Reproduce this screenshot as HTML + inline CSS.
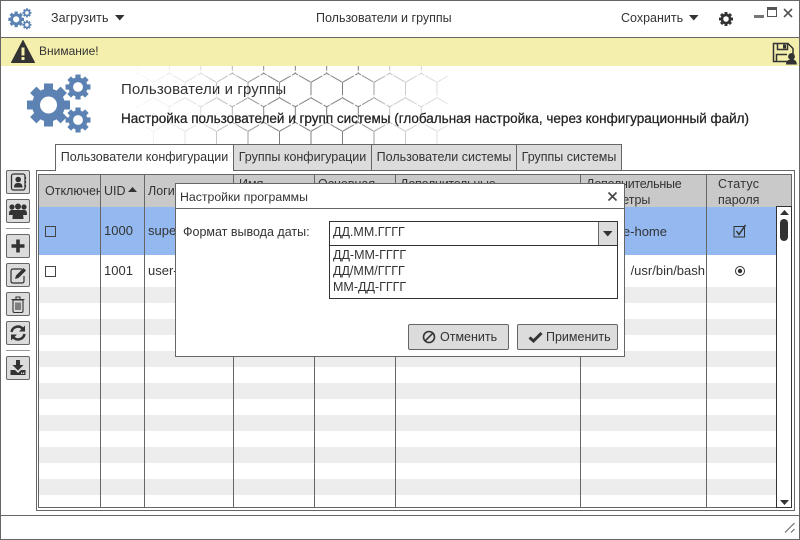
<!DOCTYPE html>
<html><head><meta charset="utf-8">
<style>
*{box-sizing:border-box}
html,body{margin:0;padding:0;width:800px;height:540px;overflow:hidden;background:#fff}
body{font-family:"Liberation Sans","DejaVu Sans",sans-serif;color:#333;font-size:12px;position:relative}
.a{position:absolute;white-space:nowrap}
.l{position:absolute;background:#666}
.tab{position:absolute;top:144px;height:27px;background:#dcdcdc;border:1px solid #666;font-size:12.5px;line-height:24px;text-align:center;color:#333;white-space:nowrap}
.btn{position:absolute;left:6px;width:24px;height:24px;background:#dcdcdc;border:1px solid #666;border-radius:2px}
.btn svg{position:absolute;left:0;top:0}
.row{position:absolute;left:39px;width:737px;height:16px;background:#ededed}
.v{position:absolute;top:175px;height:332px;width:1px;background:#666}
.h{position:absolute;font-size:12.5px;line-height:16px;color:#333;white-space:nowrap}
.dbtn{position:absolute;top:324px;height:26px;width:101px;background:#dcdcdc;border:1px solid #666;border-radius:2px;font-size:12.5px;line-height:24px;color:#333}
</style></head>
<body>
<svg width="0" height="0" style="position:absolute">
<defs>
<g id="gear"><circle r="16.500" fill="currentColor"/><rect x="-4.500" y="-21.500" width="9" height="43" fill="currentColor"/><rect x="-4.500" y="-21.500" width="9" height="43" fill="currentColor" transform="rotate(45)"/><rect x="-4.500" y="-21.500" width="9" height="43" fill="currentColor" transform="rotate(90)"/><rect x="-4.500" y="-21.500" width="9" height="43" fill="currentColor" transform="rotate(135)"/><circle r="8.500" fill="#fff"/></g>
<g id="gears"><use href="#gear" transform="translate(22.500,31)"/><use href="#gear" transform="translate(52,13) scale(.58)"/><use href="#gear" transform="translate(52,46) scale(.58)"/></g>
</defs></svg>

<!-- window frame -->
<div class="a" style="left:0;top:0;width:800px;height:540px;border:1px solid #666"></div>
<div class="l" style="left:1px;top:37px;width:798px;height:1px"></div>
<div class="a" style="left:1px;top:38px;width:798px;height:28px;background:#f4efad"></div>
<div class="l" style="left:1px;top:515px;width:798px;height:1px"></div>

<!-- toolbar -->
<svg class="a" style="left:8px;top:8px;color:#5b82b2;overflow:visible" width="24" height="22" viewBox="0 0 66 60"><use href="#gears"/></svg>
<div class="a" style="left:51px;top:11px;font-size:12.500px;line-height:15px;letter-spacing:.05px">Загрузить</div>
<svg class="a" style="left:115px;top:15px" width="10" height="6"><path d="M0 0H9.500L4.750 5.500Z" fill="#333"/></svg>
<div class="a" style="left:316px;top:11px;font-size:12.500px;line-height:15px">Пользователи и группы</div>
<div class="a" style="left:621px;top:11px;font-size:12.500px;line-height:15px">Сохранить</div>
<svg class="a" style="left:689px;top:15px" width="10" height="6"><path d="M0 0H9.500L4.750 5.500Z" fill="#333"/></svg>
<svg class="a" style="left:719px;top:12px;color:#333" width="14" height="14" viewBox="-21.500 -21.500 43 43"><use href="#gear"/></svg>
<div class="a" style="left:754px;top:15px;width:10px;height:3px;background:#777"></div>
<div class="a" style="left:767px;top:7px;width:10px;height:10px;border:1px solid #555;border-top:3px solid #555"></div>
<svg class="a" style="left:783px;top:8px" width="10" height="10"><path d="M1 1L9 9M9 1L1 9" stroke="#555" stroke-width="1.600"/></svg>

<!-- warning -->
<svg class="a" style="left:11px;top:40px" width="24" height="23" viewBox="0 0 24 23"><path d="M12 0.500L23.500 22.500H0.500Z" fill="#333" stroke="#333" stroke-linejoin="round"/><rect x="10.500" y="7.500" width="3" height="8" fill="#f4efad"/><rect x="10.500" y="17" width="3" height="3" fill="#f4efad"/></svg>
<div class="a" style="left:39px;top:44px;font-size:12px;line-height:15px">Внимание!</div>
<svg class="a" style="left:772px;top:42px" width="25" height="23" viewBox="0 0 25 23"><path d="M1.500 1.500H16L21 6.500V19.500H1.500Z M5.500 1.500V7.500H15.500V1.500 M4.500 19.500V12.500H15" fill="none" stroke="#333" stroke-width="1.500"/><rect x="11" y="2.500" width="3" height="4" fill="#333"/><circle cx="19.500" cy="14.500" r="3.400" fill="#333"/><path d="M14 22.500C14 18.500 16.500 17.500 19.500 17.500S24.800 18.500 24.800 22.500Z" fill="#333"/></svg>

<!-- hexagon backdrop -->
<svg class="a" style="left:130px;top:66px" width="500" height="78" viewBox="130 66 500 78">
<defs>
<pattern id="hx" x="311" y="73.300" width="31.500" height="49" patternUnits="userSpaceOnUse">
<path d="M0 9L15.750 0L31.500 9M0 9V24.500M31.500 9V24.500M0 24.500L15.750 33.500L31.500 24.500M15.750 33.500V49" fill="none" stroke="#444" stroke-width=".8" stroke-dasharray="13 1.500 7 1"/>
</pattern>
<linearGradient id="fd" x1="0" x2="1" y1="0" y2="0">
<stop offset="0" stop-color="#fff" stop-opacity=".03"/><stop offset=".04" stop-color="#fff" stop-opacity=".08"/><stop offset=".14" stop-color="#fff" stop-opacity=".22"/><stop offset=".28" stop-color="#fff" stop-opacity=".85"/><stop offset=".46" stop-color="#fff" stop-opacity=".85"/><stop offset=".52" stop-color="#fff" stop-opacity=".4"/><stop offset=".634" stop-color="#fff" stop-opacity=".18"/><stop offset=".64" stop-color="#fff" stop-opacity="0"/><stop offset="1" stop-color="#fff" stop-opacity="0"/>
</linearGradient>
<mask id="mk"><rect x="130" y="66" width="500" height="78" fill="url(#fd)"/></mask>
</defs>
<rect x="130" y="66" width="500" height="78" fill="url(#hx)" mask="url(#mk)"/>
</svg>

<!-- header -->
<svg class="a" style="left:26px;top:74px;color:#5b82b2;overflow:visible" width="66" height="60" viewBox="0 0 66 60"><use href="#gears"/></svg>
<div class="a" style="left:121px;top:81px;font-size:15px;line-height:18px;color:#333;letter-spacing:.12px">Пользователи и группы</div>
<div class="a" style="left:121px;top:110px;font-size:13.500px;line-height:17px;color:#222;-webkit-text-stroke:.25px #222">Настройка пользователей и групп системы (глобальная настройка, через конфигурационный файл)</div>

<!-- panel -->
<div class="a" style="left:36px;top:170px;width:759px;height:341px;border:1px solid #666"></div>
<div class="tab" style="left:233px;width:139px">Группы конфигурации</div>
<div class="tab" style="left:371px;width:146px">Пользователи системы</div>
<div class="tab" style="left:516px;width:106px">Группы системы</div>
<div class="tab" style="left:55px;width:179px;background:#fff;border-bottom:none">Пользователи конфигурации</div>

<!-- table -->
<div class="a" style="left:38px;top:174px;width:754px;height:334px;border:1px solid #666;background:#fff"></div>
<div class="a" style="left:39px;top:175px;width:752px;height:32px;background:#c9c9c9"></div>
<div class="a" style="left:39px;top:207px;width:737px;height:48px;background:#93b9f0"></div>
<div class="row" style="top:287px"></div><div class="row" style="top:319px"></div><div class="row" style="top:351px"></div><div class="row" style="top:383px"></div><div class="row" style="top:415px"></div><div class="row" style="top:447px"></div><div class="row" style="top:479px"></div>
<div class="v" style="left:100px"></div><div class="v" style="left:144px"></div><div class="v" style="left:233px"></div><div class="v" style="left:314px"></div><div class="v" style="left:395px"></div><div class="v" style="left:580px"></div><div class="v" style="left:706px"></div>

<div class="a" style="left:45px;top:183px;width:55px;overflow:hidden;font-size:12.500px;line-height:16px">Отключен</div>
<div class="h" style="left:104px;top:183px">UID</div>
<svg class="a" style="left:128px;top:187px" width="9" height="5"><path d="M0 5L4.500 0L9 5Z" fill="#333"/></svg>
<div class="h" style="left:148px;top:183px">Логин</div>
<div class="h" style="left:239px;top:176px">Имя</div>
<div class="h" style="left:318px;top:176px">Основная</div>
<div class="h" style="left:400px;top:176px;letter-spacing:-.25px">Дополнительные</div>
<div class="h" style="left:586px;top:176px;letter-spacing:-.25px">Дополнительные</div>
<div class="h" style="left:586px;top:192px">параметры</div>
<div class="h" style="left:718px;top:176px;letter-spacing:.3px">Статус</div>
<div class="h" style="left:718px;top:192px">пароля</div>

<div class="a" style="left:45px;top:226px;width:11px;height:11px;border:1px solid #444"></div>
<div class="a" style="left:45px;top:266px;width:11px;height:11px;border:1px solid #444"></div>
<div class="a" style="left:104px;top:223px;font-size:13px;line-height:16px">1000</div>
<div class="a" style="left:104px;top:263px;font-size:13px;line-height:16px">1001</div>
<div class="a" style="left:148px;top:223px;font-size:13px;line-height:16px">super</div>
<div class="a" style="left:148px;top:263px;font-size:13px;line-height:16px">user-</div>
<div class="a" style="left:567px;top:224px;width:100px;text-align:right;font-size:13px;line-height:16px">home/e-home</div>
<div class="a" style="left:586px;top:263px;width:119px;text-align:right;overflow:hidden;font-size:13px;line-height:16px">/usr/bin/bash</div>
<svg class="a" style="left:733px;top:224px" width="14" height="14"><rect x="1" y="2.500" width="10.500" height="10.500" fill="none" stroke="#333"/><path d="M3.500 7L6 10.500L12.500 1" fill="none" stroke="#333" stroke-width="1.500"/></svg>
<svg class="a" style="left:734px;top:265px" width="12" height="12"><circle cx="6" cy="6" r="4.500" fill="none" stroke="#333"/><circle cx="6" cy="6" r="2.200" fill="#333"/></svg>

<!-- scrollbar -->
<div class="a" style="left:776px;top:206px;width:16px;height:302px;background:#fff;border:1px solid #333"></div>
<svg class="a" style="left:780px;top:210px" width="9" height="5"><path d="M0 5L4.500 0L9 5Z" fill="#333"/></svg>
<div class="a" style="left:780px;top:219px;width:8px;height:22px;background:#333;border-radius:4px"></div>
<svg class="a" style="left:780px;top:500px" width="9" height="5"><path d="M0 0H9L4.500 5Z" fill="#333"/></svg>

<!-- side toolbar -->
<div class="btn" style="top:170px"><svg width="22" height="22"><rect x="4.500" y="3" width="13.500" height="16" rx="2" fill="none" stroke="#333" stroke-width="1.300"/><circle cx="11.200" cy="8.500" r="2.800" fill="#333"/><path d="M7 16.500C7 12.500 9 12 11.200 12S15.500 12.500 15.500 16.500Z" fill="#333"/><path d="M18.500 6V8M18.500 10V12M18.500 14V16" stroke="#333" stroke-width="1.200"/></svg></div>
<div class="btn" style="top:199px"><svg width="22" height="22"><circle cx="5" cy="7" r="2.600" fill="#333"/><circle cx="17" cy="7" r="2.600" fill="#333"/><circle cx="11" cy="6.500" r="3" fill="#333"/><path d="M2 14C2 10.500 3.500 10 5 10H17C18.500 10 20 10.500 20 14V15H2ZM5.500 19C5.500 12 8 11 11 11S16.500 12 16.500 19Z" fill="#333"/></svg></div>
<div class="a" style="left:6px;top:228px;width:24px;height:1px;background:#999"></div>
<div class="btn" style="top:234px"><svg width="22" height="22"><path d="M11 4.500V17.500M4.500 11H17.500" stroke="#333" stroke-width="3.600" fill="none"/></svg></div>
<div class="btn" style="top:263px"><svg width="22" height="22"><path d="M15 5H6Q4 5 4 7V17Q4 19 6 19H15Q17 19 17 17V12" fill="none" stroke="#333" stroke-width="1.200"/><path d="M8 15L9 11.500L16.500 4L19 6.500L11.500 14Z" fill="#333"/></svg></div>
<div class="btn" style="top:292px"><svg width="22" height="22"><path d="M6 7H16V18Q16 19.500 14.500 19.500H7.500Q6 19.500 6 18Z M4.500 6.500H17.500 M9 6V4H13V6 M9 9.500V17 M11 9.500V17 M13 9.500V17" fill="none" stroke="#333" stroke-width="1.100"/></svg></div>
<div class="btn" style="top:321px"><svg width="22" height="22"><path d="M4.500 10A6.500 6.500 0 0 1 15.500 6.500M17.500 12A6.500 6.500 0 0 1 6.500 15.500" fill="none" stroke="#333" stroke-width="2.500"/><path d="M18 3.500V9.500H12ZM4 18.500V12.500H10Z" fill="#333"/></svg></div>
<div class="a" style="left:6px;top:350px;width:24px;height:1px;background:#999"></div>
<div class="btn" style="top:356px"><svg width="22" height="22"><path d="M9 3H13V8H16.500L11 13.500L5.500 8H9Z" fill="#333"/><path d="M3.500 13H8L11 16L14 13H18.500V18H3.500Z" fill="#333"/><rect x="14" y="15.500" width="1.200" height="1.500" fill="#dcdcdc"/><rect x="16" y="15.500" width="1.200" height="1.500" fill="#dcdcdc"/></svg></div>

<!-- dialog -->
<div class="a" style="left:175px;top:183px;width:450px;height:174px;background:#fff;border:1px solid #666"></div>
<div class="l" style="left:176px;top:208px;width:448px;height:1px"></div>
<div class="a" style="left:180px;top:190px;font-size:12.300px;line-height:15px">Настройки программы</div>
<svg class="a" style="left:607px;top:191px" width="11" height="11"><path d="M1.500 1.500L9.500 9.500M9.500 1.500L1.500 9.500" stroke="#444" stroke-width="1.600"/></svg>
<div class="a" style="left:183px;top:225px;font-size:12.500px;line-height:15px">Формат вывода даты:</div>
<div class="a" style="left:329px;top:221px;width:289px;height:25px;border:1px solid #333;background:#fff"></div>
<div class="a" style="left:333px;top:225px;font-size:12.500px;line-height:15px">ДД.ММ.ГГГГ</div>
<div class="a" style="left:598px;top:222px;width:19px;height:23px;background:#dcdcdc;border-left:1px solid #666"></div>
<svg class="a" style="left:603px;top:231px" width="10" height="6"><path d="M0 0H9.500L4.750 5.500Z" fill="#333"/></svg>
<div class="a" style="left:329px;top:245px;width:289px;height:54px;border:1px solid #333;background:#fff"></div>
<div class="a" style="left:333px;top:247px;font-size:12.500px;line-height:16px">ДД-ММ-ГГГГ<br>ДД/ММ/ГГГГ<br>ММ-ДД-ГГГГ</div>
<div class="dbtn" style="left:408px"><svg class="a" style="left:13px;top:5px" width="14" height="14"><circle cx="7" cy="7" r="5.500" fill="none" stroke="#333" stroke-width="1.600"/><path d="M3.200 10.800L10.800 3.200" stroke="#333" stroke-width="1.600"/></svg><span class="a" style="left:31px;top:0">Отменить</span></div>
<div class="dbtn" style="left:517px"><svg class="a" style="left:10px;top:5px" width="15" height="14"><path d="M1.500 7.500L5.500 11L13.500 3" fill="none" stroke="#333" stroke-width="3"/></svg><span class="a" style="left:28px;top:0">Применить</span></div>

<!-- grip -->
<svg class="a" style="left:784px;top:522px" width="12" height="12"><path d="M1 10.500L10.500 1M7 10.500L10.500 7" stroke="#666" stroke-width="1.100" fill="none"/></svg>
</body></html>
